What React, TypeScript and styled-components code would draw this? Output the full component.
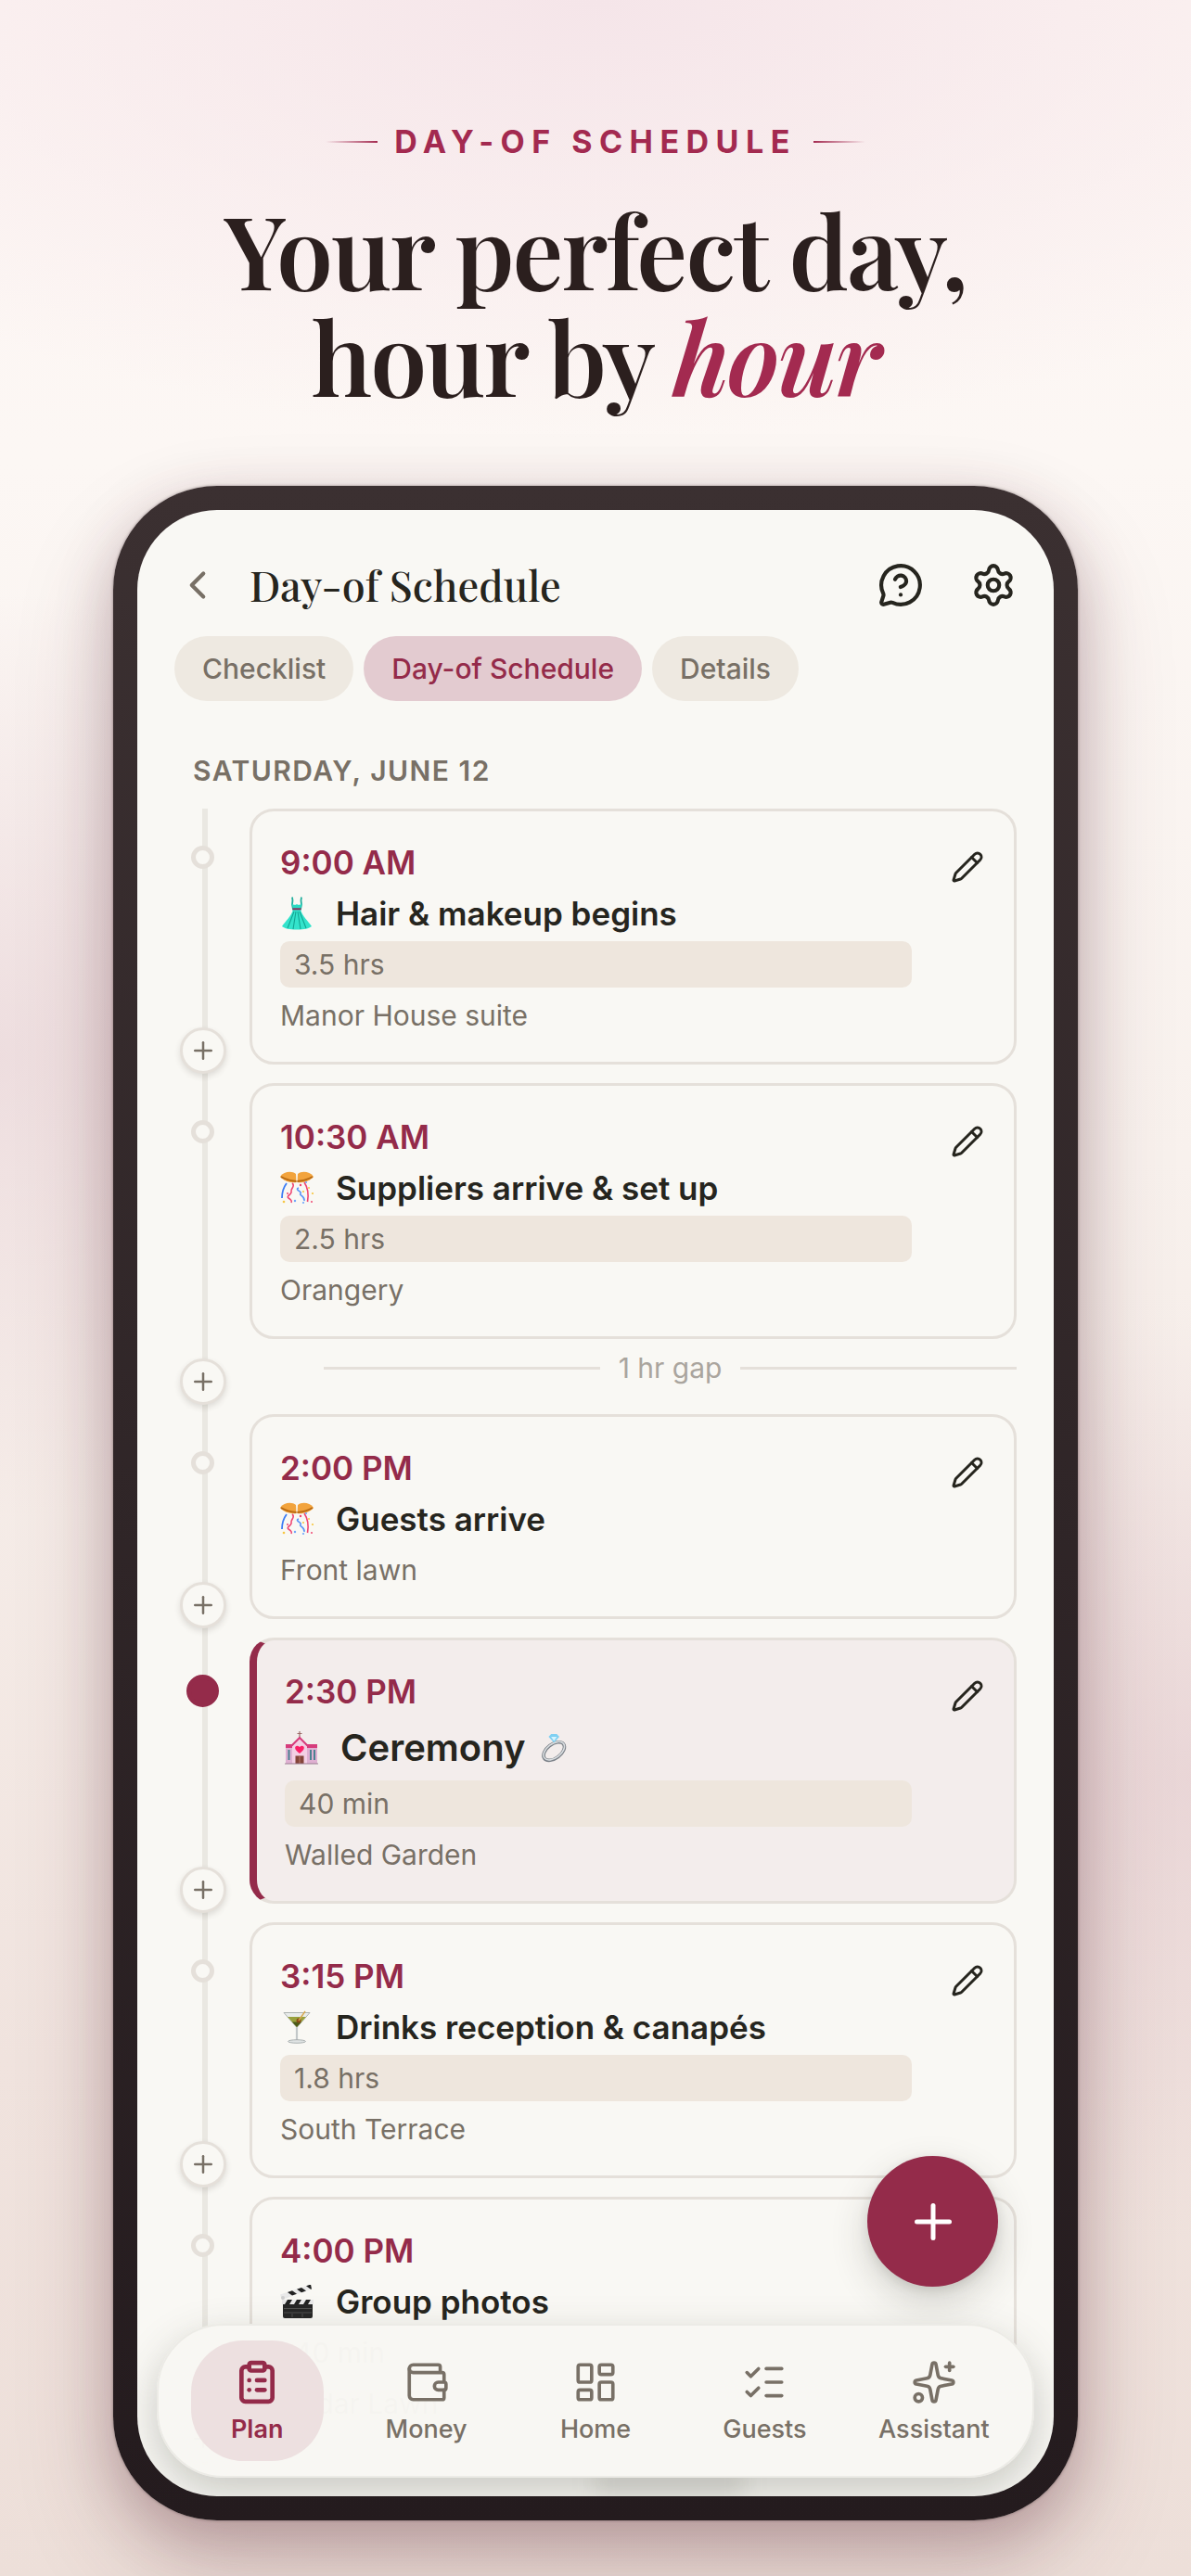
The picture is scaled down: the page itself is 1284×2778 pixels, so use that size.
import React from "react";
import styled, { createGlobalStyle, css } from "styled-components";
import {
  ChevronLeft,
  ClipboardList,
  LayoutDashboard,
  ListChecks,
  MessageCircleQuestionMark,
  Pencil,
  Plus,
  Settings,
  Sparkles,
  Wallet,
} from "lucide-react";

const color = {
  paper: "#f9f8f4",
  ink: "#26251e",
  muted: "#787066",
  faint: "#aaa59e",
  accent: "#942b4a",
  brand: "#a32a50",
  border: "#e5e0da",
  rail: "#eae8e2",
  chip: "#eee9e1",
  chipActive: "#e3cbd0",
  duration: "#eee6dd",
};

const sans = `Inter, "Liberation Sans", sans-serif`;
const serif = `"Playfair Display", "Liberation Serif", serif`;

const GlobalStyle = createGlobalStyle`
  *, *::before, *::after { box-sizing: border-box; }
  html, body { margin: 0; }
  body { font-family: ${sans}; color: ${color.ink}; background: #f6ecea; }
  button { font: inherit; color: inherit; border: 0; padding: 0; background: none; cursor: pointer; }
  h1, h2, h3, p, ol, ul { margin: 0; padding: 0; }
  ol, ul { list-style: none; }
`;

const Page = styled.main`
  display: flex;
  flex-direction: column;
  height: 100vh;
  min-height: 1400px;
  padding: 132px 122px 60px;
  overflow: hidden;
  background:
    radial-gradient(ellipse 80% 17% at 50% 0%, #f5e5e9 0%, rgba(245, 229, 233, 0) 100%),
    radial-gradient(ellipse 36% 18% at 0% 41%, rgba(224, 196, 204, 0.45) 0%, rgba(224, 196, 204, 0) 100%),
    radial-gradient(ellipse 36% 18% at 100% 69%, rgba(222, 192, 200, 0.45) 0%, rgba(222, 192, 200, 0) 100%),
    linear-gradient(180deg, #fdf5f3 0%, #fcf7f4 18%, #f8f1ed 45%, #f0e3de 80%, #eddfd9 100%);
`;

const Hero = styled.header`
  display: flex;
  flex-direction: column;
  align-items: center;
  text-align: center;
  margin-bottom: 84px;
`;

const Eyebrow = styled.p`
  display: flex;
  align-items: center;
  gap: 18px;
  margin-bottom: 36px;
  font-size: 34px;
  line-height: 42px;
  font-weight: 700;
  letter-spacing: 0.22em;
  color: ${color.brand};

  &::before,
  &::after {
    content: "";
    width: 56px;
    height: 2px;
    background: linear-gradient(90deg, rgba(163, 42, 80, 0), ${color.brand});
  }
  &::after {
    background: linear-gradient(270deg, rgba(163, 42, 80, 0), ${color.brand});
  }
`;

const Headline = styled.h1`
  font-family: ${serif};
  font-size: 109px;
  line-height: 115px;
  font-weight: 600;
  letter-spacing: -2px;
  color: #2b1f1e;

  em {
    color: ${color.brand};
  }
`;

const Phone = styled.section`
  flex: 1;
  min-height: 0;
  padding: 26px;
  border-radius: 112px;
  background: linear-gradient(180deg, #3b3031 0%, #241b1e 100%);
  box-shadow:
    0 0 3px rgba(60, 40, 44, 0.5),
    0 20px 60px rgba(90, 40, 55, 0.26),
    0 50px 110px rgba(90, 40, 50, 0.2);
`;

const Screen = styled.div`
  position: relative;
  display: flex;
  flex-direction: column;
  height: 100%;
  overflow: hidden;
  border-radius: 86px;
  background: ${color.paper};
`;

const AppBar = styled.div`
  display: flex;
  align-items: center;
  height: 136px;
  padding: 26px 40px 0;
`;

const IconButton = styled.button<{ $muted?: boolean }>`
  display: grid;
  place-items: center;
  width: 50px;
  height: 50px;
  color: ${(p) => (p.$muted ? color.muted : color.ink)};
`;

const ScreenTitle = styled.h2`
  flex: 1;
  margin-left: 31px;
  padding-bottom: 2px;
  font-family: ${serif};
  font-size: 45px;
  line-height: 60px;
  font-weight: 500;
`;

const Actions = styled.div`
  display: flex;
  gap: 50px;
`;

const Tabs = styled.div`
  display: flex;
  gap: 11px;
  padding: 0 40px;
`;

const Tab = styled.button<{ $active?: boolean }>`
  height: 70px;
  padding: 0 30px;
  border-radius: 35px;
  font-size: 30px;
  font-weight: 500;
  color: ${(p) => (p.$active ? color.accent : color.muted)};
  background: ${(p) => (p.$active ? color.chipActive : color.chip)};
`;

const Schedule = styled.div`
  flex: 1;
  min-height: 0;
  overflow: hidden;
  padding: 50px 40px 0;
`;

const DayLabel = styled.h3`
  margin-bottom: 16px;
  padding-left: 20px;
  font-size: 30px;
  line-height: 50px;
  font-weight: 600;
  letter-spacing: 0.05em;
  text-transform: uppercase;
  color: ${color.muted};
`;

const Timeline = styled.ol`
  background: linear-gradient(${color.rail}, ${color.rail}) 30px 0 / 6px 100% no-repeat;
`;

const Entry = styled.li`
  display: grid;
  grid-template-columns: 61px minmax(0, 1fr);
  column-gap: 20px;
`;

const Rail = styled.div`
  display: flex;
  flex-direction: column;
  align-items: center;
  justify-content: space-between;
  padding: 40px 0 10px;
`;

const Dot = styled.span<{ $filled?: boolean }>`
  width: 25px;
  height: 25px;
  border: 5px solid ${color.border};
  border-radius: 50%;
  background: ${color.paper};
  ${(p) =>
    p.$filled &&
    css`
      width: 35px;
      height: 35px;
      border-color: ${color.accent};
      background: ${color.accent};
    `}
`;

const InsertButton = styled.button`
  display: grid;
  place-items: center;
  width: 50px;
  height: 50px;
  border: 3px solid ${color.border};
  border-radius: 50%;
  color: ${color.muted};
  background: ${color.paper};
  box-shadow: 0 3px 6px rgba(60, 50, 40, 0.14);
`;

const Body = styled.div`
  padding-bottom: 20px;
`;

const Card = styled.article<{ $highlight?: boolean }>`
  display: flex;
  align-items: flex-start;
  gap: 40px;
  padding: 30px 30px 25px;
  border: 3px solid ${color.border};
  border-radius: 26px;
  background: ${color.paper};
  ${(p) =>
    p.$highlight &&
    css`
      border-left: 8px solid ${color.accent};
      background: #f3edec;
    `}
`;

const Details = styled.div`
  flex: 1;
  min-width: 0;
  display: flex;
  flex-direction: column;
  gap: 5px;
`;

const Time = styled.p`
  font-size: 35px;
  line-height: 50px;
  font-weight: 600;
  color: ${color.accent};
`;

const EventTitle = styled.h3<{ $large?: boolean }>`
  display: flex;
  align-items: center;
  font-size: ${(p) => (p.$large ? 40 : 35)}px;
  line-height: ${(p) => (p.$large ? 61 : 50)}px;
  font-weight: 600;
`;

const Emoji = styled.svg`
  flex: none;
  width: 36px;
  height: 36px;
`;

const EmojiSlot = styled.span`
  display: flex;
  width: 60px;
`;

const Suffix = styled.span`
  display: flex;
  margin-left: 16px;

  svg {
    width: 32px;
    height: 32px;
  }
`;

const Duration = styled.p`
  padding: 0 15px;
  border-radius: 10px;
  font-size: 30px;
  line-height: 50px;
  color: ${color.muted};
  background: ${color.duration};
`;

const Location = styled.p`
  font-size: 30px;
  line-height: 50px;
  color: ${color.muted};
`;

const EditButton = styled.button`
  display: grid;
  place-items: center;
  width: 40px;
  height: 40px;
  margin-top: 10px;
`;

const Gap = styled.p`
  display: flex;
  align-items: center;
  gap: 20px;
  padding: 13px 0 12px 80px;
  font-size: 30px;
  line-height: 36px;
  color: ${color.faint};

  &::before,
  &::after {
    content: "";
    flex: 1;
    height: 3px;
    background: ${color.border};
  }
`;

const HomeIndicator = styled.div`
  position: absolute;
  bottom: 4px;
  left: 50%;
  width: 160px;
  height: 20px;
  background: rgba(60, 60, 50, 0.16);
  filter: blur(12px);
`;

const AddButton = styled.button`
  position: absolute;
  right: 60px;
  bottom: 226px;
  display: grid;
  place-items: center;
  width: 141px;
  height: 141px;
  border-radius: 50%;
  color: #fff;
  background: ${color.accent};
  box-shadow: 0 16px 40px rgba(50, 50, 40, 0.2), 0 4px 12px rgba(50, 50, 40, 0.12);
`;

const NavBar = styled.nav`
  position: absolute;
  left: 21px;
  right: 21px;
  bottom: 20px;
  display: flex;
  padding: 16px 15px;
  border: 2px solid #ecebe6;
  border-radius: 72px;
  background: rgba(248, 247, 243, 0.98);
  box-shadow: 0 16px 44px rgba(60, 64, 56, 0.26);
`;

const NavItem = styled.button<{ $active?: boolean }>`
  flex: 1;
  display: flex;
  justify-content: center;
  color: ${(p) => (p.$active ? color.accent : color.muted)};
  font-size: 27px;
  line-height: 32px;
  font-weight: ${(p) => (p.$active ? 600 : 500)};
`;

const NavContent = styled.span<{ $active?: boolean }>`
  display: flex;
  flex-direction: column;
  align-items: center;
  gap: 10px;
  min-width: 143px;
  padding: 20px 0 18px;
  border-radius: 56px;
  background: ${(p) => (p.$active ? "#ede0e0" : "transparent")};
`;

function Dress() {
  return (
    <Emoji viewBox="0 0 36 36" aria-hidden="true">
      <path d="M13 .5c1 3 .5 5.500 0 8l1 5h8l1-5c-.5-2.500-1-5 0-8" fill="none" stroke="#1fae9c" strokeWidth="1.800" />
      <path d="M12.500 7c2 2 3.500 2.500 5.500 1 2 1.500 3.500 1 5.500-1L22 13.500h-8z" fill="#2bd9c2" />
      <path d="M14 14h8c2 7 8 12 12 18-3 2.500-8 3.500-16 3.500S5 34.500 2 32c4-6 10-11 12-18z" fill="#33e3cb" />
      <path d="M15 16 8 34M17 16l-3 19M19 16l3 19M21 16l7 18" stroke="#12a593" strokeWidth="1.100" fill="none" />
      <path d="M13.500 12.300h9v2h-9z" fill="#8b2f5c" />
    </Emoji>
  );
}

function Confetti() {
  return (
    <Emoji viewBox="0 0 36 36" aria-hidden="true">
      <path d="M0 6C4 0 13-.5 17 3l.5 9C12 13 4 11 0 6z" fill="#f2a33c" />
      <path d="M36 6C32 0 23-.5 19 3l-.5 9C24 13 32 11 36 6z" fill="#f2a33c" />
      <path d="M1 6c5 3 11 4.500 16.500 5M35 6c-5 3-11 4.500-16.500 5" stroke="#b86a13" strokeWidth="1.800" fill="none" />
      <path d="M7 13c-3 4-5 9-5 16" stroke="#3b7cf5" strokeWidth="1.800" fill="none" />
      <path d="M13 13c4 3-2 6-1 9s-6 5-3 7 4 3 3 5" stroke="#ef4672" strokeWidth="1.600" fill="none" />
      <path d="M20 18c-5 2 4 4 2 6s5 3 4 8" stroke="#5a95f7" strokeWidth="1.600" fill="none" />
      <path d="M26 12c4 6 5 13 3.500 21" stroke="#ef4672" strokeWidth="1.600" fill="none" />
      <g fill="#f7c744">
        <circle cx="4" cy="33" r="1.300" />
        <circle cx="25" cy="22" r="1.100" />
        <circle cx="35" cy="24" r="1.100" />
        <circle cx="31" cy="18" r="1" />
      </g>
      <g fill="#ef4672">
        <circle cx="22" cy="15" r="1.200" />
        <circle cx="8" cy="24" r="1" />
        <circle cx="34" cy="33" r="1" />
      </g>
      <g fill="#6fa5fa">
        <circle cx="16" cy="32" r="1.200" />
        <circle cx="25" cy="34" r="1.100" />
        <circle cx="28" cy="12" r="1.100" />
      </g>
    </Emoji>
  );
}

function Church() {
  return (
    <Emoji viewBox="0 0 36 36" aria-hidden="true">
      <path d="M16 0v8M13.500 2.500h5" stroke="#9b6a68" strokeWidth="1.200" />
      <path d="M1 17h34v18H1z" fill="#dfb0d2" />
      <path d="M1 14h34v4H1z" fill="#d63c7c" />
      <path d="M8 16 16 7l8 9v19H8z" fill="#f3cfe4" />
      <path d="M6.500 16.500 16 7l9.500 9.500" fill="none" stroke="#d63c7c" strokeWidth="2" />
      <path d="M16 24c-8.500-5.500-4-10.500 0-7 4-3.500 8.500 1.500 0 7z" fill="#fb1f68" />
      <path d="M11.500 26.500h9V35h-9z" fill="#84443a" />
      <path d="M16 26.500V35" stroke="#b97b6a" />
      <path d="M3.500 20h2v11h-2zM27 20h2v11h-2zM31 20h2v11h-2z" fill="#4b8291" />
      <path d="M0 35h36" stroke="#9b7d92" />
    </Emoji>
  );
}

function Ring() {
  return (
    <Emoji viewBox="0 0 36 36" aria-hidden="true">
      <ellipse cx="16" cy="22" rx="14.500" ry="8.500" transform="rotate(-37 16 22)" fill="none" stroke="#7b8188" strokeWidth="4" />
      <ellipse cx="16" cy="21.500" rx="14.500" ry="8.500" transform="rotate(-37 16 21.500)" fill="none" stroke="#d9dde0" strokeWidth="1.800" />
      <path d="m9.500 4.500 3-3.500h7l3 3.500-6.500 7z" fill="#7fd0f2" />
      <path d="m12.500 4.500 3.500 5 3.500-5z" fill="#d7f3fd" />
    </Emoji>
  );
}

function Cocktail() {
  return (
    <Emoji viewBox="0 0 36 36" aria-hidden="true">
      <path d="m4 2.500 14 16 14-16z" fill="#e9ecea" stroke="#aeb4b2" strokeWidth="1" />
      <path d="M8 7h20L18 18z" fill="#98a13c" />
      <path d="m13 12.500 5 5.500 5-5.500z" fill="#4c5a18" />
      <circle cx="20" cy="11" r="2.500" fill="#8a4a16" />
      <path d="m20 11 7-10" stroke="#d6a84e" strokeWidth="1.400" />
      <path d="M18 18v15" stroke="#c3c8c9" strokeWidth="2.200" />
      <ellipse cx="18" cy="33.500" rx="9.500" ry="1.800" fill="#dfe3e3" stroke="#9da3a4" strokeWidth=".8" />
    </Emoji>
  );
}

function Clapper() {
  return (
    <Emoji viewBox="0 0 36 36" aria-hidden="true">
      <path d="m0 10.500 33-11 1 5L2 16z" fill="#e9e9e9" />
      <path d="m8 8 5 3.500 5-1.700L13 6.300zM18 4.700l5 3.500 5-1.600-5-3.600zM28 1.300l5 3.500 1-.3-1-5z" fill="#222" />
      <path d="M2 16h34v5H2z" fill="#e9e9e9" />
      <path d="m8 16-3 5h5l3-5zM18 16l-3 5h5l3-5zM28 16l-3 5h5l3-5z" fill="#222" />
      <path d="M3 21h32v13a2 2 0 0 1-2 2H5a2 2 0 0 1-2-2z" fill="#262626" />
      <path d="M4 25.500h30M4 30h30M13 31v4M24 31v4" stroke="#555" strokeWidth=".9" />
      <circle cx="3" cy="14" r="2" fill="#cfcfcf" />
    </Emoji>
  );
}

type ScheduleEvent = {
  time: string;
  title: string;
  place: string;
  icon: () => React.ReactElement;
  duration?: string;
  gapAfter?: string;
  highlight?: boolean;
};

const events: ScheduleEvent[] = [
  { time: "9:00 AM", title: "Hair & makeup begins", duration: "3.5 hrs", place: "Manor House suite", icon: Dress },
  { time: "10:30 AM", title: "Suppliers arrive & set up", duration: "2.5 hrs", place: "Orangery", icon: Confetti, gapAfter: "1 hr gap" },
  { time: "2:00 PM", title: "Guests arrive", place: "Front lawn", icon: Confetti },
  { time: "2:30 PM", title: "Ceremony", duration: "40 min", place: "Walled Garden", icon: Church, highlight: true },
  { time: "3:15 PM", title: "Drinks reception & canapés", duration: "1.8 hrs", place: "South Terrace", icon: Cocktail },
  { time: "4:00 PM", title: "Group photos", duration: "40 min", place: "Cedar Lawn", icon: Clapper },
];

const navItems = [
  { label: "Plan", Icon: ClipboardList, active: true },
  { label: "Money", Icon: Wallet },
  { label: "Home", Icon: LayoutDashboard },
  { label: "Guests", Icon: ListChecks },
  { label: "Assistant", Icon: Sparkles },
];

function EventEntry({ event }: { event: ScheduleEvent }) {
  const Icon = event.icon;
  return (
    <Entry>
      <Rail>
        <Dot $filled={event.highlight} />
        <InsertButton aria-label={`Add event after ${event.title}`}>
          <Plus size={30} strokeWidth={2} />
        </InsertButton>
      </Rail>
      <Body>
        <Card $highlight={event.highlight}>
          <Details>
            <Time>{event.time}</Time>
            <EventTitle $large={event.highlight}>
              <EmojiSlot>
                <Icon />
              </EmojiSlot>
              {event.title}
              {event.highlight && (
                <Suffix>
                  <Ring />
                </Suffix>
              )}
            </EventTitle>
            {event.duration && <Duration>{event.duration}</Duration>}
            <Location>{event.place}</Location>
          </Details>
          <EditButton aria-label={`Edit ${event.title}`}>
            <Pencil size={36} strokeWidth={2} />
          </EditButton>
        </Card>
        {event.gapAfter && <Gap>{event.gapAfter}</Gap>}
      </Body>
    </Entry>
  );
}

export default function App() {
  return (
    <>
      <GlobalStyle />
      <Page>
        <Hero>
          <Eyebrow>DAY-OF SCHEDULE</Eyebrow>
          <Headline>
            Your perfect day,
            <br />
            hour by <em>hour</em>
          </Headline>
        </Hero>
        <Phone>
          <Screen>
            <AppBar>
              <IconButton $muted aria-label="Back">
                <ChevronLeft size={50} strokeWidth={2} />
              </IconButton>
              <ScreenTitle>Day-of Schedule</ScreenTitle>
              <Actions>
                <IconButton aria-label="Help">
                  <MessageCircleQuestionMark size={50} strokeWidth={2} />
                </IconButton>
                <IconButton aria-label="Settings">
                  <Settings size={50} strokeWidth={2} />
                </IconButton>
              </Actions>
            </AppBar>
            <Tabs>
              <Tab>Checklist</Tab>
              <Tab $active aria-current="page">Day-of Schedule</Tab>
              <Tab>Details</Tab>
            </Tabs>
            <Schedule>
              <DayLabel>Saturday, June 12</DayLabel>
              <Timeline>
                {events.map((event) => (
                  <EventEntry key={event.time} event={event} />
                ))}
              </Timeline>
            </Schedule>
            <AddButton aria-label="Add event">
              <Plus size={60} strokeWidth={2} />
            </AddButton>
            <HomeIndicator />
            <NavBar>
              {navItems.map(({ label, Icon, active }) => (
                <NavItem key={label} $active={active}>
                  <NavContent $active={active}>
                    <Icon size={50} strokeWidth={active ? 2.25 : 1.75} />
                    {label}
                  </NavContent>
                </NavItem>
              ))}
            </NavBar>
          </Screen>
        </Phone>
      </Page>
    </>
  );
}
